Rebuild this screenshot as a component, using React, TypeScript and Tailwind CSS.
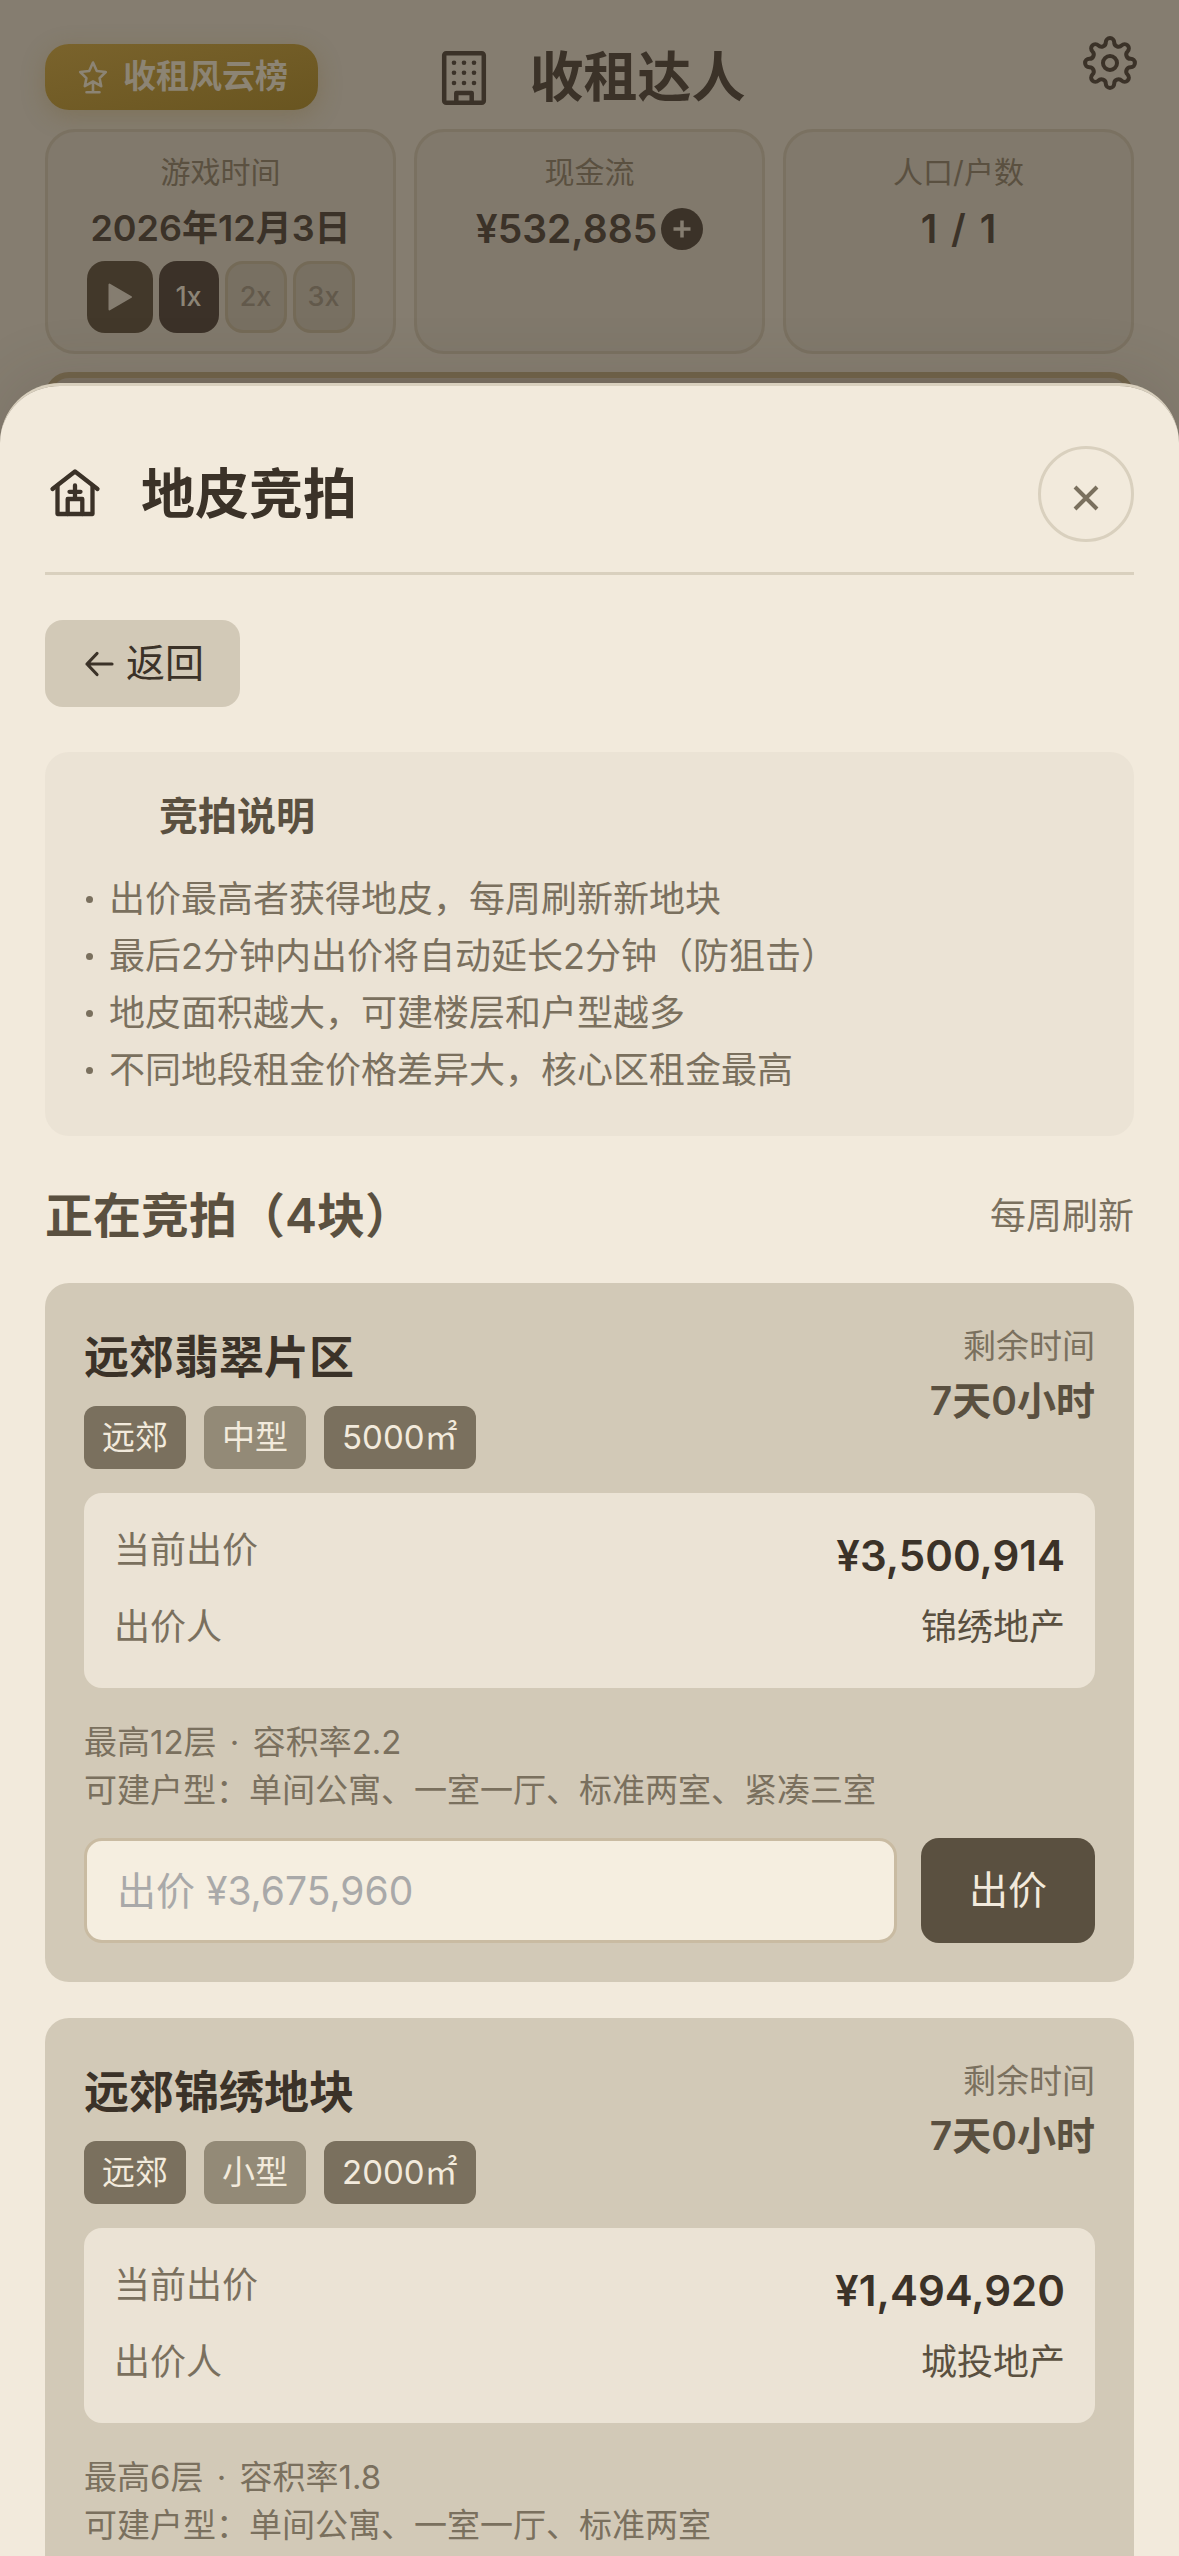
import type { ReactNode } from "react";

type Plot = {
  id: string;
  name: string;
  area: string;
  size: string;
  sqm: string;
  left: string;
  price: string;
  bidder: string;
  floors: string;
  ratio: string;
  units: string;
  minBid: string;
};

const plots: Plot[] = [
  {
    id: "p1",
    name: "远郊翡翠片区",
    area: "远郊",
    size: "中型",
    sqm: "5000㎡",
    left: "7天0小时",
    price: "¥3,500,914",
    bidder: "锦绣地产",
    floors: "最高12层",
    ratio: "容积率2.2",
    units: "可建户型：单间公寓、一室一厅、标准两室、紧凑三室",
    minBid: "出价 ¥3,675,960",
  },
  {
    id: "p2",
    name: "远郊锦绣地块",
    area: "远郊",
    size: "小型",
    sqm: "2000㎡",
    left: "7天0小时",
    price: "¥1,494,920",
    bidder: "城投地产",
    floors: "最高6层",
    ratio: "容积率1.8",
    units: "可建户型：单间公寓、一室一厅、标准两室",
    minBid: "出价 ¥1,569,666",
  },
];

const rules = [
  "出价最高者获得地皮，每周刷新新地块",
  "最后2分钟内出价将自动延长2分钟（防狙击）",
  "地皮面积越大，可建楼层和户型越多",
  "不同地段租金价格差异大，核心区租金最高",
];

function StarTrophyIcon() {
  return (
    <svg viewBox="0 0 36 36" className="size-9 shrink-0" fill="none" stroke="currentColor" strokeWidth="2.6" strokeLinejoin="round" strokeLinecap="round" aria-hidden="true">
      <path d="M18 3.5 21.8 12l9 1-6.2 6.2 1.6 8L18 22.5l-8.2 4.7 1.6-8L5.200 13l9-1Z" />
      <path d="M18 23v10M11.500 33.300h13" />
    </svg>
  );
}

function BuildingIcon() {
  return (
    <svg viewBox="0 0 60 60" className="size-15 shrink-0" fill="none" stroke="currentColor" strokeWidth="4.500" strokeLinejoin="round" aria-hidden="true">
      <rect x="10.200" y="5.200" width="39.600" height="49.600" rx="2" />
      <path d="M22.300 54.500V45h15.400v9.500" />
      <g fill="currentColor" stroke="none">
        {[14.700, 24.700, 35].map((y) =>
          [20, 30, 40].map((x) => <circle key={`${x}-${y}`} cx={x} cy={y} r="2.300" />),
        )}
      </g>
    </svg>
  );
}

// Eight round lobes joined by tangent notches.
function gearPath() {
  const lobe = { r: 4.2, d: 20.8 };
  const notch = { r: 4.3, d: 22.3 };
  const at = (d: number, deg: number) => {
    const a = (deg * Math.PI) / 180;
    return [30 + d * Math.cos(a), 30 + d * Math.sin(a)];
  };
  const touch = (lobeDeg: number, notchDeg: number) => {
    const [lx, ly] = at(lobe.d, lobeDeg);
    const [nx, ny] = at(notch.d, notchDeg);
    const t = lobe.r / (lobe.r + notch.r);
    return `${(lx + (nx - lx) * t).toFixed(2)} ${(ly + (ny - ly) * t).toFixed(2)}`;
  };
  let d = `M${touch(0, -22.5)}`;
  for (let i = 0; i < 8; i++) {
    const deg = i * 45;
    d += `A${lobe.r} ${lobe.r} 0 0 1 ${touch(deg, deg + 22.5)}`;
    d += `A${notch.r} ${notch.r} 0 0 0 ${touch(deg + 45, deg + 22.5)}`;
  }
  return d + "Z";
}

function GearIcon() {
  return (
    <svg viewBox="0 0 60 60" className="size-15" fill="none" stroke="currentColor" strokeWidth="4" strokeLinejoin="round" aria-hidden="true">
      <path d={gearPath()} />
      <circle cx="30" cy="30" r="7" />
    </svg>
  );
}

function HouseIcon() {
  return (
    <svg viewBox="0 0 60 60" className="size-15 shrink-0" fill="none" stroke="currentColor" strokeWidth="4.300" strokeLinejoin="round" strokeLinecap="round" aria-hidden="true">
      <path d="M7.500 25 30 7.500 52.500 25" />
      <path d="M12.500 22v28h35V22" />
      <path d="M22.700 50V35h14.600v15M30 21.500V34M24.500 27.800h11" />
    </svg>
  );
}

function StatCard({ label, children }: { label: string; children: ReactNode }) {
  return (
    <div className="flex flex-col items-center rounded-[30px] border-3 border-[#7a7161] bg-[#81796c] pt-[19px] pb-[18px]">
      <div className="text-[30px] leading-[42px] text-[#5a5040]">{label}</div>
      {children}
    </div>
  );
}

function PlotCard({ plot }: { plot: Plot }) {
  return (
    <article className="rounded-3xl bg-[#d2c9b7] p-[39px]">
      <div className="flex items-start justify-between">
        <div>
          <h3 className="text-[45px] leading-[72px] font-bold text-[#3b3228]">{plot.name}</h3>
          <div className="mt-3 flex gap-[18px] text-[33px] leading-[63px] text-[#f2eadc]">
            <span className="rounded-xl bg-[#7a705e] px-[18px]">{plot.area}</span>
            <span className="rounded-xl bg-[#938a77] px-[18px]">{plot.size}</span>
            <span className="rounded-xl bg-[#7a705e] px-[18px]">{plot.sqm}</span>
          </div>
        </div>
        <div className="text-right">
          <div className="text-[33px] leading-[48px] text-[#7a705e]">剩余时间</div>
          <div className="text-[39px] leading-[62px] font-semibold text-[#5a5040]">{plot.left}</div>
        </div>
      </div>

      <dl className="mt-6 rounded-[18px] bg-[#ebe3d5] px-[30px] pt-[27px] pb-[25px] text-4xl">
        <div className="flex items-start justify-between">
          <dt className="leading-[60px] text-[#7a705e]">当前出价</dt>
          <dd className="text-[42px] leading-[72px] font-semibold text-[#3b3228]">{plot.price}</dd>
        </div>
        <div className="flex items-start justify-between leading-[71px]">
          <dt className="text-[#7a705e]">出价人</dt>
          <dd className="text-[#5a5040]">{plot.bidder}</dd>
        </div>
      </dl>

      <div className="mt-[30px] text-[33px] leading-[48px] text-[#7a705e]">
        <p>
          {plot.floors} <span className="mx-1">·</span> {plot.ratio}
        </p>
        <p>{plot.units}</p>
      </div>

      <form className="mt-6 flex gap-6" onSubmit={(e) => e.preventDefault()}>
        <input
          type="text"
          inputMode="numeric"
          aria-label={`${plot.name}出价`}
          placeholder={plot.minBid}
          className="h-[105px] min-w-0 flex-1 rounded-[18px] border-3 border-[#c9bba2] bg-[#f5eee0] px-[30px] text-[39px] text-[#3b3228] outline-none placeholder:text-[#a9a9a9]"
        />
        <button type="submit" className="rounded-[18px] bg-[#5a5040] px-12 text-[39px] text-[#f2eadc]">
          出价
        </button>
      </form>
    </article>
  );
}

export default function App() {
  return (
    <div className="flex h-screen flex-col overflow-hidden bg-[#857d70] font-['Inter','Noto_Sans_CJK_SC',sans-serif] text-[#3b3228]">
      <header className="grid shrink-0 grid-cols-[1fr_auto_1fr] items-start px-[45px] pt-[33px]">
        <button
          type="button"
          className="mt-[11px] flex h-[66px] items-center gap-3 justify-self-start rounded-3xl bg-linear-to-br from-[#7a632c] to-[#695520] px-[30px] text-[33px] font-semibold text-[#8c8474] shadow-[0_6px_24px_rgba(110,90,35,0.3)]"
        >
          <StarTrophyIcon />
          收租风云榜
        </button>
        <h1 className="mt-[15px] flex items-center gap-9 text-[54px] leading-[60px] font-semibold">
          <BuildingIcon />
          收租达人
        </h1>
        <button type="button" aria-label="设置" className="-mr-1.5 justify-self-end">
          <GearIcon />
        </button>
      </header>

      <section className="mt-[19px] grid shrink-0 grid-cols-3 gap-[18px] px-[45px]">
        <StatCard label="游戏时间">
          <div className="mt-2 text-4xl leading-[54px] font-semibold">2026年12月3日</div>
          <div className="mt-1.5 flex gap-1.5 text-[27px] font-medium">
            <button type="button" aria-label="播放" className="grid h-[72px] w-[66px] place-items-center rounded-[18px] bg-[#42382a] text-[#857d70]">
              <svg viewBox="0 0 24 28" className="h-7 w-6" fill="currentColor" stroke="currentColor" strokeWidth="2" strokeLinejoin="round" aria-hidden="true">
                <path d="M1.500 1.500v25L23 14Z" />
              </svg>
            </button>
            <button type="button" className="h-[72px] w-15 rounded-[18px] bg-[#3b3128] text-[#8c8476]">1x</button>
            <button type="button" disabled className="h-[72px] w-[62px] rounded-[18px] border-3 border-[#746a57] bg-[#787062] text-[#62594b]">2x</button>
            <button type="button" disabled className="h-[72px] w-[62px] rounded-[18px] border-3 border-[#746a57] bg-[#787062] text-[#62594b]">3x</button>
          </div>
        </StatCard>
        <StatCard label="现金流">
          <div className="mt-2 flex items-center gap-1 text-[39px] leading-[56px] font-semibold">
            ¥532,885
            <button type="button" aria-label="增加现金" className="grid size-[42px] place-items-center rounded-full bg-[#3b3228] text-[#857d70]">
              <svg viewBox="0 0 18 18" className="size-[18px]" stroke="currentColor" strokeWidth="3.500" aria-hidden="true">
                <path d="M9 0.500v17M0.500 9h17" />
              </svg>
            </button>
          </div>
        </StatCard>
        <StatCard label="人口/户数">
          <div className="mt-2 text-[39px] leading-[56px] font-semibold">
            1 <span className="mx-1">/</span> 1
          </div>
        </StatCard>
      </section>

      <div className="mx-[45px] mt-[18px] h-15 shrink-0 rounded-3xl border-6 border-[#71634a] bg-[#7a7062]" />

      <main className="relative -mt-[49px] min-h-0 flex-1 overflow-y-auto rounded-t-[60px] border-t-3 border-[#d9d0be] bg-[#f2eadc] px-[45px] pt-15 pb-[45px] shadow-[0_-12px_60px_rgba(59,50,40,0.12)] [scrollbar-width:none]">
        <div className="flex items-center justify-between border-b-3 border-[#d9d0be] pb-[30px]">
          <h2 className="flex items-center gap-9 text-[54px] leading-[60px] font-bold">
            <HouseIcon />
            <span className="pt-0.5">地皮竞拍</span>
          </h2>
          <button type="button" aria-label="关闭" className="grid size-24 place-items-center rounded-full border-3 border-[#d9d0be] pt-2 text-[#7a705e]">
            <svg viewBox="0 0 26 26" className="size-[26px]" stroke="currentColor" strokeWidth="4" aria-hidden="true">
              <path d="M2 2l22 22M24 2 2 24" />
            </svg>
          </button>
        </div>

        <button type="button" className="mt-[45px] flex h-[87px] items-center gap-3 rounded-[18px] bg-[#d2c9b7] pr-9 pl-[39px] text-[39px]">
          <svg viewBox="0 0 30 30" className="size-[30px]" fill="none" stroke="currentColor" strokeWidth="3.200" strokeLinecap="round" strokeLinejoin="round" aria-hidden="true">
            <path d="M28 15H3M13 4.500 3 15l10 10.500" />
          </svg>
          返回
        </button>

        <section className="mt-[45px] rounded-3xl bg-[#ebe3d5] px-[39px] pt-[39px] pb-[37px]">
          <h3 className="flex gap-9 text-[39px] leading-[50px] font-bold text-[#5a5040]">
            <span className="w-[39px]" />
            竞拍说明
          </h3>
          <ul className="mt-[30px] text-4xl leading-[57px] text-[#7a705e]">
            {rules.map((rule) => (
              <li key={rule} className="flex items-center gap-4">
                <span className="ml-0.5 size-[7px] shrink-0 rounded-full bg-[#7a705e]" />
                {rule}
              </li>
            ))}
          </ul>
        </section>

        <div className="mt-11 mb-[31px] flex items-center justify-between">
          <h3 className="text-5xl leading-[72px] font-semibold text-[#5a5040]">正在竞拍（4块）</h3>
          <span className="text-4xl leading-[72px] text-[#7a705e]">每周刷新</span>
        </div>

        <div className="flex flex-col gap-9">
          {plots.map((plot) => (
            <PlotCard key={plot.id} plot={plot} />
          ))}
        </div>
      </main>
    </div>
  );
}
